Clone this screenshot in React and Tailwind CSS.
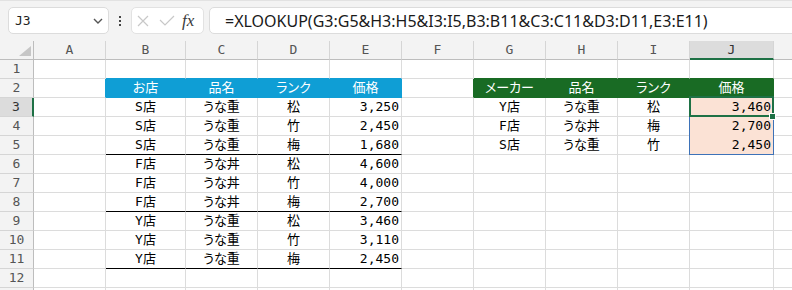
import React from 'react';

const COLS = ['A', 'B', 'C', 'D', 'E', 'F', 'G', 'H', 'I', 'J'];

// B3:E11 source table
const SRC = [
    ['S店', 'うな重', '松', '3,250'],
    ['S店', 'うな重', '竹', '2,450'],
    ['S店', 'うな重', '梅', '1,680'],
    ['F店', 'うな丼', '松', '4,600'],
    ['F店', 'うな丼', '竹', '4,000'],
    ['F店', 'うな丼', '梅', '2,700'],
    ['Y店', 'うな重', '松', '3,460'],
    ['Y店', 'うな重', '竹', '3,110'],
    ['Y店', 'うな重', '梅', '2,450'],
];

// G3:J5 lookup table
const LOOKUP = [
    ['Y店', 'うな重', '松', '3,460'],
    ['F店', 'うな丼', '梅', '2,700'],
    ['S店', 'うな重', '竹', '2,450'],
];

const getValue = (r, ci) => {
    if (r === 2 && ci >= 1 && ci <= 4) return ['お店', '品名', 'ランク', '価格'][ci - 1];
    if (r === 2 && ci >= 6 && ci <= 9) return ['メーカー', '品名', 'ランク', '価格'][ci - 6];
    if (r >= 3 && r <= 11 && ci >= 1 && ci <= 4) return SRC[r - 3][ci - 1];
    if (r >= 3 && r <= 5 && ci >= 6 && ci <= 9) return LOOKUP[r - 3][ci - 6];
    return '';
};

const cellStyle = (r, ci) => {
    const col = COLS[ci];
    const inBE = ci >= 1 && ci <= 4;
    const inGJ = ci >= 6 && ci <= 9;
    let bg = 'bg-white';
    let right = 'border-r-[#dcdcdc]';
    let bottom = 'border-b-[#dcdcdc]';
    let text = 'text-black';

    if (r === 1 && inBE) bottom = 'border-b-[#0f9ed5]';
    if (r === 1 && inGJ) bottom = 'border-b-[#196b24]';
    if (r === 2) {
        if (col === 'A') right = 'border-r-[#0f9ed5]';
        if (col === 'F') right = 'border-r-[#196b24]';
        if (inBE) { bg = 'bg-[#0f9ed5]'; right = 'border-r-[#0f9ed5]'; bottom = 'border-b-[#0f9ed5]'; text = 'text-white'; }
        if (inGJ) { bg = 'bg-[#196b24]'; right = 'border-r-[#196b24]'; bottom = 'border-b-[#196b24]'; text = 'text-white'; }
    }
    if ((r === 5 || r === 8 || r === 11) && inBE) bottom = 'border-b-black';
    if (col === 'J' && r >= 3 && r <= 5) { bg = 'bg-[#fbe2d5]'; right = 'border-r-[#fbe2d5]'; bottom = 'border-b-[#fbe2d5]'; }

    const isNum = r >= 3 && (col === 'E' || col === 'J');
    const align = isNum ? 'justify-end pr-[2px]' : 'justify-center';
    return `h-[19px] border-r border-b ${right} ${bottom} ${bg} ${text} ${align} flex items-center whitespace-nowrap overflow-hidden`;
};

const FormulaBar = () => (
    <div className="h-[41px] bg-[#f3f3f3] border-t border-[#e2e2e2] flex items-start pt-[6px] pl-[8px] overflow-hidden">
        <div className="w-[101px] h-[27px] shrink-0 bg-white border border-[#dcdcdc] rounded-[5px] flex items-center justify-between pl-[6px] pr-[5px] text-[13px] text-[#222]">
            <span>J3</span>
            <svg width="10" height="6" viewBox="0 0 10 6"><path d="M1 1 L5 5 L9 1" fill="none" stroke="#555" strokeWidth="1.4" /></svg>
        </div>
        <div className="ml-[9px] w-[3px] h-[27px] shrink-0 flex flex-col items-center justify-center gap-[2px]">
            <div className="w-[2px] h-[2px] bg-[#444]" />
            <div className="w-[2px] h-[2px] bg-[#444]" />
            <div className="w-[2px] h-[2px] bg-[#444]" />
        </div>
        <div className="ml-[10px] w-[73px] h-[27px] shrink-0 bg-white border border-[#e2e2e2] rounded-[5px] flex items-center pl-[5px]">
            <svg width="12" height="12" viewBox="0 0 12 12"><path d="M1 1 L11 11 M11 1 L1 11" stroke="#c8c8c8" strokeWidth="1.2" /></svg>
            <svg className="ml-[10px]" width="16" height="11" viewBox="0 0 16 11"><path d="M1 5 L6 10 L15 1" fill="none" stroke="#c8c8c8" strokeWidth="1.2" /></svg>
            <span className="ml-[7px] font-['Liberation_Serif'] italic text-[17px] leading-none text-[#3a3a3a]">fx</span>
        </div>
        <div className="ml-[5px] w-[640px] h-[27px] shrink-0 bg-white border border-[#dcdcdc] rounded-[5px] pl-[15px] flex items-center font-['Noto_Sans'] text-[16px] text-[#1a1a1a] whitespace-nowrap">
            =XLOOKUP(G3:G5&H3:H5&I3:I5,B3:B11&C3:C11&D3:D11,E3:E11)
        </div>
    </div>
);

const Sheet = () => {
    const rows = Array.from({ length: 13 }, (_, i) => i + 1);
    return (
        <div className="relative h-[249px] overflow-hidden">
            <div className="grid grid-cols-[34px_72px_80px_72px_72px_72px_72px_72px_72px_72px_84px_1fr] text-[13px] [font-feature-settings:'palt']">
                {/* column headers */}
                <div className="h-[19px] border-r border-b border-r-[#bdbdbd] border-b-[#bdbdbd] bg-[#f3f3f3] flex items-end justify-end pr-[2px] pb-[3px]">
                    <svg width="12" height="10" viewBox="0 0 12 10"><polygon points="12,0 12,10 0,10" fill="#c6c6c6" /></svg>
                </div>
                {COLS.map(c => (
                    c === 'J' ? (
                        <div key={c} className="h-[19px] border-r border-b-2 border-r-[#d5d5d5] border-b-[#1e7145] bg-[#dcdcdc] flex items-center justify-center text-[#333]">{c}</div>
                    ) : (
                        <div key={c} className="h-[19px] border-r border-b border-r-[#d5d5d5] border-b-[#bdbdbd] bg-[#f3f3f3] flex items-center justify-center text-[#555]">{c}</div>
                    )
                ))}
                <div className="h-[19px] border-b border-b-[#bdbdbd] bg-[#f3f3f3]" />

                {rows.map(r => (
                    <React.Fragment key={r}>
                        {r === 3 ? (
                            <div className="h-[19px] border-r-2 border-b border-r-[#1e7145] border-b-[#d5d5d5] bg-[#dcdcdc] flex items-center justify-center text-[#333]">{r}</div>
                        ) : (
                            <div className="h-[19px] border-r border-b border-r-[#bdbdbd] border-b-[#d5d5d5] bg-[#f3f3f3] flex items-center justify-center text-[#555]">{r < 13 ? r : ''}</div>
                        )}
                        {COLS.map((c, ci) => (
                            <div key={c} className={cellStyle(r, ci)}>{getValue(r, ci)}</div>
                        ))}
                        <div className="h-[19px] border-b border-b-[#dcdcdc] bg-white" />
                    </React.Fragment>
                ))}
            </div>

            {/* spill range J3:J5 */}
            <div className="absolute left-[689px] top-[56px] w-[85px] h-[58px] border border-[#3d72b8]" />
            {/* active cell J3 */}
            <div className="absolute left-[689px] top-[55px] w-[85px] h-[21px] border-2 border-[#1e7145]" />
            <div className="absolute left-[769px] top-[72px] w-[7px] h-[7px] bg-[#1e7145] border border-white" />
        </div>
    );
};

export default function App() {
    return (
        <div className="w-[792px] h-[290px] overflow-hidden bg-white font-['DejaVu_Sans_Mono','Noto_Sans_CJK_JP',monospace]">
            <FormulaBar />
            <Sheet />
        </div>
    );
}
